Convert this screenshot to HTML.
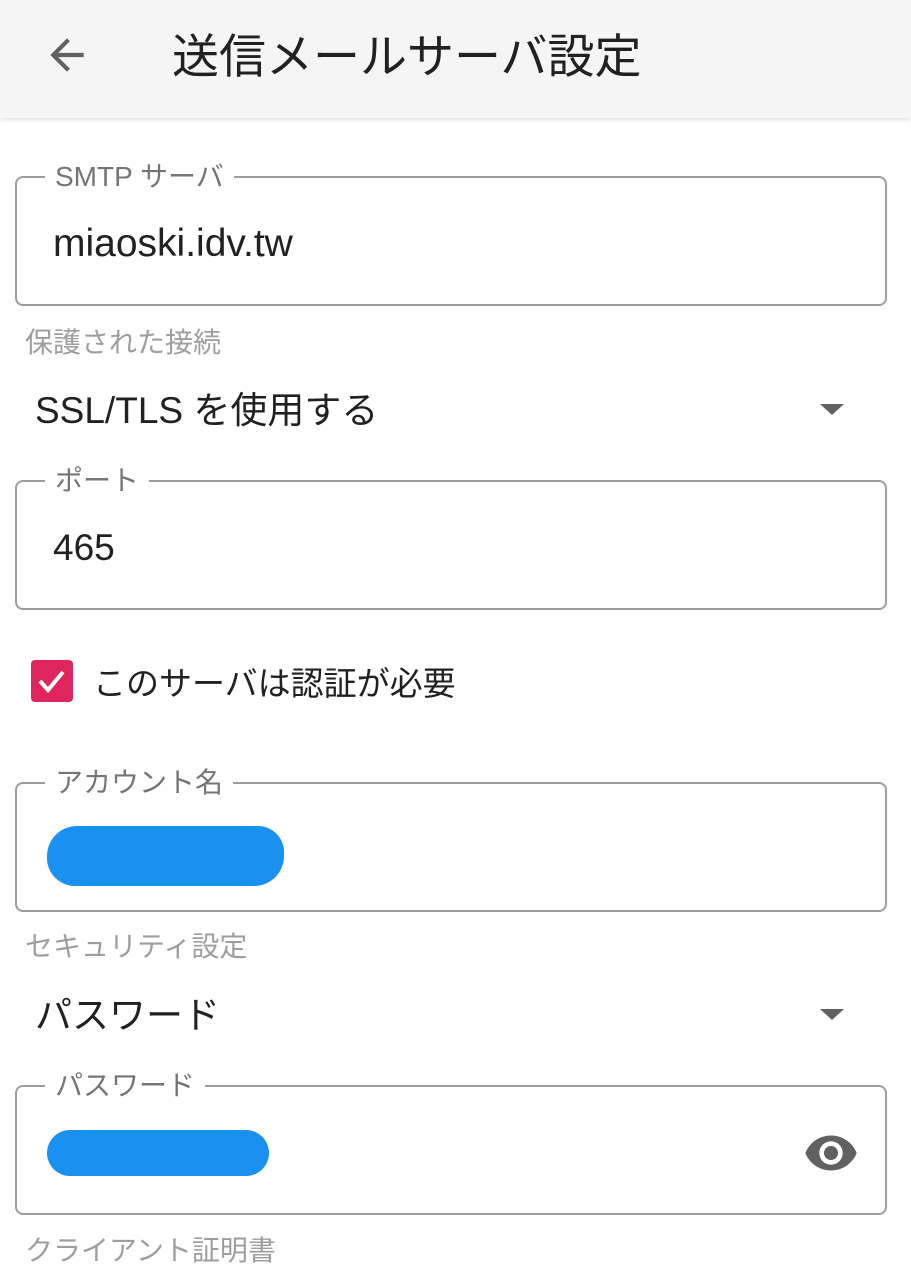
<!DOCTYPE html>
<html><head><meta charset="utf-8"><style>
*{margin:0;padding:0;box-sizing:border-box}
body{width:911px;height:1280px;background:#fff;position:relative;overflow:hidden;font-family:"Liberation Sans","Noto Sans CJK JP",sans-serif;color:#212121}
.hdr{position:absolute;left:0;top:0;width:911px;height:118px;background:#f5f5f5;box-shadow:0 2px 4px rgba(0,0,0,.12)}
.t{position:absolute;white-space:nowrap;line-height:1}
.box{position:absolute;left:15px;width:872px;height:130px;border:2px solid #9e9e9e;border-radius:8px}
.lab{position:absolute;top:-17px;left:28px;background:#fff;padding:0 10px;font-size:28px;color:#757575;line-height:32px}
.val{position:absolute;left:36px;font-size:37px;line-height:40px;color:#212121}
.gl{font-size:28px;color:#9e9e9e}
.tri{position:absolute;width:0;height:0;border-left:12px solid transparent;border-right:12px solid transparent;border-top:11px solid #616161}
</style></head><body>
<div class="hdr">
<svg style="position:absolute;left:42px;top:30px" width="50" height="50" viewBox="0 0 24 24"><path d="M20 11H7.8l5.6-5.6L12 4l-8 8 8 8 1.4-1.4L7.8 13H20z" fill="#616161"/></svg>
<div class="t" style="left:172px;top:33px;font-size:47px;color:#212121">送信メールサーバ設定</div>
</div>
<div class="box" style="top:176px"><div class="lab">SMTP サーバ</div><div class="val" style="top:46px;font-size:39px">miaoski.idv.tw</div></div>
<div class="t gl" style="left:25px;top:329px">保護された接続</div>
<div class="t" style="left:35px;top:392px;font-size:37px">SSL/TLS を使用する</div>
<div class="tri" style="left:820px;top:404px"></div>
<div class="box" style="top:480px"><div class="lab">ポート</div><div class="val" style="top:46px">465</div></div>
<div style="position:absolute;left:31px;top:660px;width:42px;height:42px;background:#e0245e;border-radius:4px">
<svg width="42" height="42" viewBox="0 0 42 42"><path d="M9 21l8 9 15-18" stroke="#fff" stroke-width="4" fill="none"/></svg></div>
<div class="t" style="left:93px;top:667px;font-size:33px">このサーバは認証が必要</div>
<div class="box" style="top:782px"><div class="lab">アカウント名</div>
<div style="position:absolute;left:30px;top:42px;width:237px;height:60px;background:#1a91f0;border-radius:30px 26px 30px 28px"></div></div>
<div class="t gl" style="left:25px;top:933px">セキュリティ設定</div>
<div class="t" style="left:35px;top:997px;font-size:37px">パスワード</div>
<div class="tri" style="left:820px;top:1009px"></div>
<div class="box" style="top:1085px"><div class="lab">パスワード</div>
<div style="position:absolute;left:30px;top:43px;width:222px;height:46px;background:#1a91f0;border-radius:23px"></div>
<svg style="position:absolute;left:786px;top:38px" width="56" height="56" viewBox="0 0 24 24"><path d="M12 4.5C7 4.5 2.7 7.6 1 12c1.7 4.4 6 7.5 11 7.5s9.3-3.1 11-7.5c-1.7-4.4-6-7.5-11-7.5zM12 17c-2.8 0-5-2.2-5-5s2.2-5 5-5 5 2.2 5 5-2.2 5-5 5zm0-8c-1.7 0-3 1.3-3 3s1.3 3 3 3 3-1.3 3-3-1.3-3-3-3z" fill="#616161"/></svg></div>
<div class="t gl" style="left:25px;top:1237px">クライアント証明書</div>
</body></html>
